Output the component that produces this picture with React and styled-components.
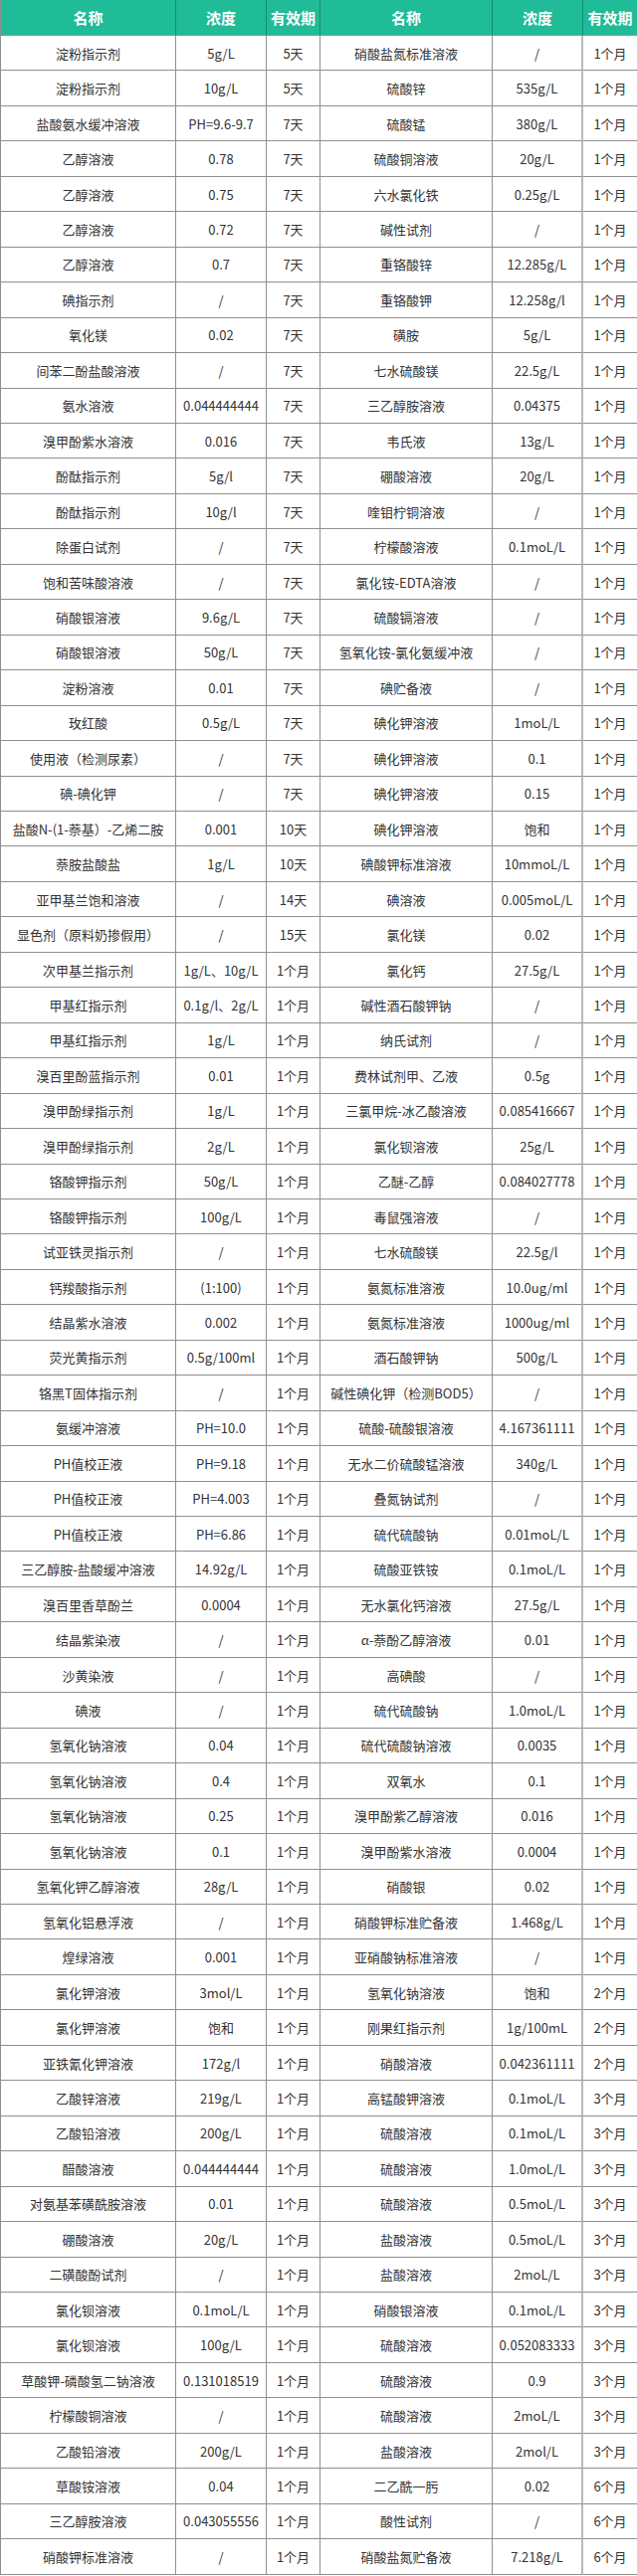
import React from 'react'
import styled, { createGlobalStyle } from 'styled-components'

const GlobalStyle = createGlobalStyle`
  html, body {
    margin: 0;
    padding: 0;
    background: #ffffff;
  }
  body {
    font-family: "Noto Sans CJK SC", "Noto Sans", "Liberation Sans", sans-serif;
  }
`

const rows = `
淀粉指示剂|5g/L|5天|硝酸盐氮标准溶液|/|1个月
淀粉指示剂|10g/L|5天|硫酸锌|535g/L|1个月
盐酸氨水缓冲溶液|PH=9.6-9.7|7天|硫酸锰|380g/L|1个月
乙醇溶液|0.78|7天|硫酸铜溶液|20g/L|1个月
乙醇溶液|0.75|7天|六水氯化铁|0.25g/L|1个月
乙醇溶液|0.72|7天|碱性试剂|/|1个月
乙醇溶液|0.7|7天|重铬酸锌|12.285g/L|1个月
碘指示剂|/|7天|重铬酸钾|12.258g/l|1个月
氧化镁|0.02|7天|磺胺|5g/L|1个月
间苯二酚盐酸溶液|/|7天|七水硫酸镁|22.5g/L|1个月
氨水溶液|0.044444444|7天|三乙醇胺溶液|0.04375|1个月
溴甲酚紫水溶液|0.016|7天|韦氏液|13g/L|1个月
酚酞指示剂|5g/l|7天|硼酸溶液|20g/L|1个月
酚酞指示剂|10g/l|7天|喹钼柠铜溶液|/|1个月
除蛋白试剂|/|7天|柠檬酸溶液|0.1moL/L|1个月
饱和苦味酸溶液|/|7天|氯化铵-EDTA溶液|/|1个月
硝酸银溶液|9.6g/L|7天|硫酸镉溶液|/|1个月
硝酸银溶液|50g/L|7天|氢氧化铵-氯化氨缓冲液|/|1个月
淀粉溶液|0.01|7天|碘贮备液|/|1个月
玫红酸|0.5g/L|7天|碘化钾溶液|1moL/L|1个月
使用液（检测尿素）|/|7天|碘化钾溶液|0.1|1个月
碘-碘化钾|/|7天|碘化钾溶液|0.15|1个月
盐酸N-(1-萘基）-乙烯二胺|0.001|10天|碘化钾溶液|饱和|1个月
萘胺盐酸盐|1g/L|10天|碘酸钾标准溶液|10mmoL/L|1个月
亚甲基兰饱和溶液|/|14天|碘溶液|0.005moL/L|1个月
显色剂（原料奶掺假用）|/|15天|氯化镁|0.02|1个月
次甲基兰指示剂|1g/L、10g/L|1个月|氯化钙|27.5g/L|1个月
甲基红指示剂|0.1g/l、2g/L|1个月|碱性酒石酸钾钠|/|1个月
甲基红指示剂|1g/L|1个月|纳氏试剂|/|1个月
溴百里酚蓝指示剂|0.01|1个月|费林试剂甲、乙液|0.5g|1个月
溴甲酚绿指示剂|1g/L|1个月|三氯甲烷-冰乙酸溶液|0.085416667|1个月
溴甲酚绿指示剂|2g/L|1个月|氯化钡溶液|25g/L|1个月
铬酸钾指示剂|50g/L|1个月|乙醚-乙醇|0.084027778|1个月
铬酸钾指示剂|100g/L|1个月|毒鼠强溶液|/|1个月
试亚铁灵指示剂|/|1个月|七水硫酸镁|22.5g/l|1个月
钙羧酸指示剂|(1:100)|1个月|氨氮标准溶液|10.0ug/ml|1个月
结晶紫水溶液|0.002|1个月|氨氮标准溶液|1000ug/ml|1个月
荧光黄指示剂|0.5g/100ml|1个月|酒石酸钾钠|500g/L|1个月
铬黑T固体指示剂|/|1个月|碱性碘化钾（检测BOD5）|/|1个月
氨缓冲溶液|PH=10.0|1个月|硫酸-硫酸银溶液|4.167361111|1个月
PH值校正液|PH=9.18|1个月|无水二价硫酸锰溶液|340g/L|1个月
PH值校正液|PH=4.003|1个月|叠氮钠试剂|/|1个月
PH值校正液|PH=6.86|1个月|硫代硫酸钠|0.01moL/L|1个月
三乙醇胺-盐酸缓冲溶液|14.92g/L|1个月|硫酸亚铁铵|0.1moL/L|1个月
溴百里香草酚兰|0.0004|1个月|无水氯化钙溶液|27.5g/L|1个月
结晶紫染液|/|1个月|α-萘酚乙醇溶液|0.01|1个月
沙黄染液|/|1个月|高碘酸|/|1个月
碘液|/|1个月|硫代硫酸钠|1.0moL/L|1个月
氢氧化钠溶液|0.04|1个月|硫代硫酸钠溶液|0.0035|1个月
氢氧化钠溶液|0.4|1个月|双氧水|0.1|1个月
氢氧化钠溶液|0.25|1个月|溴甲酚紫乙醇溶液|0.016|1个月
氢氧化钠溶液|0.1|1个月|溴甲酚紫水溶液|0.0004|1个月
氢氧化钾乙醇溶液|28g/L|1个月|硝酸银|0.02|1个月
氢氧化铝悬浮液|/|1个月|硝酸钾标准贮备液|1.468g/L|1个月
煌绿溶液|0.001|1个月|亚硝酸钠标准溶液|/|1个月
氯化钾溶液|3mol/L|1个月|氢氧化钠溶液|饱和|2个月
氯化钾溶液|饱和|1个月|刚果红指示剂|1g/100mL|2个月
亚铁氰化钾溶液|172g/l|1个月|硝酸溶液|0.042361111|2个月
乙酸锌溶液|219g/L|1个月|高锰酸钾溶液|0.1moL/L|3个月
乙酸铅溶液|200g/L|1个月|硫酸溶液|0.1moL/L|3个月
醋酸溶液|0.044444444|1个月|硫酸溶液|1.0moL/L|3个月
对氨基苯磺酰胺溶液|0.01|1个月|硫酸溶液|0.5moL/L|3个月
硼酸溶液|20g/L|1个月|盐酸溶液|0.5moL/L|3个月
二磺酸酚试剂|/|1个月|盐酸溶液|2moL/L|3个月
氯化钡溶液|0.1moL/L|1个月|硝酸银溶液|0.1moL/L|3个月
氯化钡溶液|100g/L|1个月|硫酸溶液|0.052083333|3个月
草酸钾-磷酸氢二钠溶液|0.131018519|1个月|硫酸溶液|0.9|3个月
柠檬酸铜溶液|/|1个月|硫酸溶液|2moL/L|3个月
乙酸铅溶液|200g/L|1个月|盐酸溶液|2mol/L|3个月
草酸铵溶液|0.04|1个月|二乙酰一肟|0.02|6个月
三乙醇胺溶液|0.043055556|1个月|酸性试剂|/|6个月
硝酸钾标准溶液|/|1个月|硝酸盐氮贮备液|7.218g/L|6个月
`
  .trim()
  .split('\n')
  .map((line) => line.split('|'))

const headers = ['名称', '浓度', '有效期', '名称', '浓度', '有效期']

const Table = styled.div`
  display: grid;
  grid-template-columns: 176px 91px 54px 173px 91px 55px;
  grid-template-rows: 36px;
  grid-auto-rows: 35.46px;
  width: 640px;
  box-sizing: border-box;
  border-left: 1px solid #8f8f8f;
`

const HeadCell = styled.div`
  display: flex;
  align-items: center;
  justify-content: center;
  box-sizing: border-box;
  background: #20bb97;
  color: #ffffff;
  font-size: 15px;
  font-weight: 700;
  white-space: nowrap;
  border-right: 1px solid ${(p) => (p.$last ? '#8f8f8f' : 'rgba(0, 60, 45, 0.35)')};
  border-bottom: 1px solid #7d9e94;
`

const Cell = styled.div`
  display: flex;
  align-items: center;
  justify-content: center;
  box-sizing: border-box;
  color: #333333;
  font-size: 13px;
  white-space: nowrap;
  overflow: hidden;
  border-bottom: 1px solid #8f8f8f;
  border-right: ${(p) => (p.$soft ? '2px solid #b9b9b9' : '1px solid #8f8f8f')};
`

export default function App() {
  return (
    <>
      <GlobalStyle />
      <Table>
        {headers.map((h, i) => (
          <HeadCell key={'h' + i} $last={i === 5}>
            {h}
          </HeadCell>
        ))}
        {rows.map((row, r) =>
          row.map((text, c) => (
            <Cell key={r + '-' + c} $soft={c === 4}>
              {text}
            </Cell>
          ))
        )}
      </Table>
    </>
  )
}
